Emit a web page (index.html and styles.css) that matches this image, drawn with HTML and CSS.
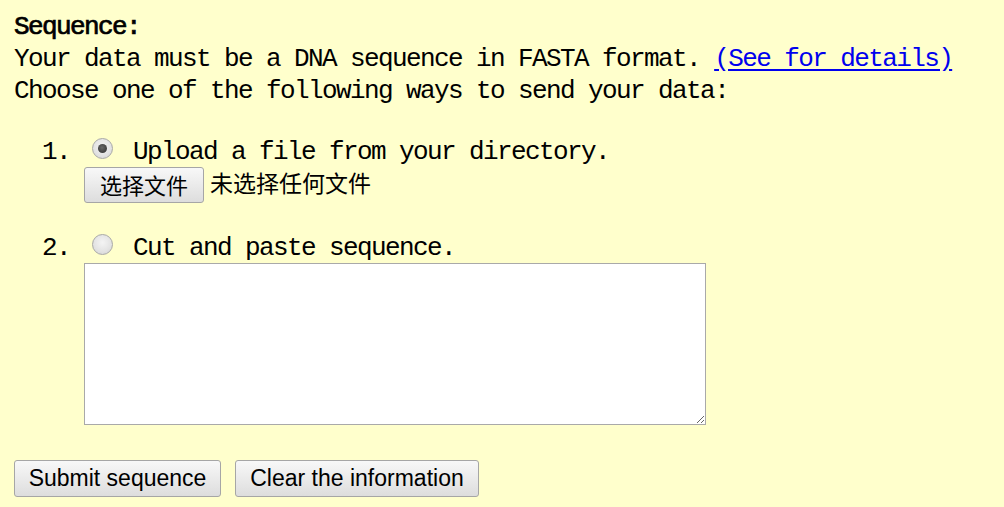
FILE: index.html
```html
<!DOCTYPE html>
<html>
<head>
<meta charset="utf-8">
<title>Sequence</title>
<link rel="stylesheet" href="styles.css">
</head>
<body>
<form class="seq-form">
  <p class="intro"><b class="heading">Sequence:</b><br>Your data must be a DNA sequence in FASTA format. <a href="#">(See for details)</a><br>Choose one of the following ways to send your data:</p>
  <ol class="ways">
    <li class="way way-file">
      <div class="opt"><input type="radio" name="src" class="radio" checked><span>Upload a file from your directory.</span></div>
      <div class="file-row"><button type="button" class="file-btn">选择文件</button><span class="file-none">未选择任何文件</span></div>
    </li>
    <li class="way">
      <div class="opt"><input type="radio" name="src" class="radio"><span>Cut and paste sequence.</span></div>
      <textarea class="seq-text"></textarea>
    </li>
  </ol>
  <div class="actions">
    <button type="button" class="btn btn-submit">Submit sequence</button>
    <button type="button" class="btn btn-clear">Clear the information</button>
  </div>
</form>
</body>
</html>
```
FILE: styles.css
```css
html, body {
  margin: 0;
  background: #ffffcc;
}
body {
  padding: 11px 14px 0 14px;
  font-family: "Liberation Mono", monospace;
  font-size: 26px;
  letter-spacing: -1.6px;
  color: #000;
}
.seq-form {
  margin: 0;
}
.intro {
  margin: 0;
  line-height: 32px;
}
.heading {
  font-family: "Liberation Mono", monospace;
  font-weight: normal;
  -webkit-text-stroke: 0.7px #000;
}
.intro a {
  color: #0000ee;
  text-decoration: underline;
  text-underline-offset: 3px;
}
.ways {
  margin: 30px 0 0 0;
  padding: 0 0 0 70px;
  list-style: decimal outside;
}
.way-file {
  margin-bottom: 30px;
}
.opt {
  display: flex;
  align-items: flex-start;
  line-height: 30px;
  height: 30px;
}
.radio {
  -webkit-appearance: none;
  appearance: none;
  box-sizing: border-box;
  width: 21px;
  height: 21px;
  margin: 1px 20px 0 8px;
  border: 1px solid #a8a8a8;
  border-radius: 50%;
  background: radial-gradient(circle at 50% 40%, #f4f4f4 0%, #e4e4e4 55%, #d2d2d2 100%);
  position: relative;
  flex: none;
}
.radio:checked::after {
  content: "";
  position: absolute;
  left: 5px;
  top: 5px;
  width: 9px;
  height: 9px;
  border-radius: 50%;
  background: radial-gradient(circle at 45% 40%, #6a6a6a 0%, #444 60%, #333 100%);
}
.file-row {
  display: flex;
  align-items: center;
  height: 36px;
}
.file-btn {
  box-sizing: border-box;
  height: 36px;
  width: 120px;
  padding: 0 0 3px 0;
  margin: 0 6px 0 0;
  font-family: "Noto Sans CJK SC", sans-serif;
  font-size: 22px;
  line-height: 1;
  letter-spacing: 0;
  color: #000;
  border: 1px solid #a6a6a6;
  border-radius: 3px;
  background: linear-gradient(#f8f8f8, #dddddd);
}
.file-none {
  font-family: "Noto Sans CJK SC", sans-serif;
  font-size: 23px;
  line-height: 1;
  letter-spacing: 0;
  padding-bottom: 6px;
}
.seq-text {
  display: block;
  box-sizing: border-box;
  width: 622px;
  height: 162px;
  margin: 0;
  border: 1px solid #a9a9a9;
  background: #fff;
  resize: both;
}
.actions {
  display: flex;
  gap: 14px;
  margin-top: 35px;
}
.btn {
  box-sizing: border-box;
  height: 37px;
  padding: 0 13px;
  font-family: "Liberation Sans", Arial, sans-serif;
  font-size: 23px;
  letter-spacing: 0;
  color: #000;
  border: 1px solid #a6a6a6;
  border-radius: 3px;
  background: linear-gradient(#f8f8f8, #dddddd);
}
.btn-submit {
  width: 207px;
}
.btn-clear {
  width: 244px;
}
```
